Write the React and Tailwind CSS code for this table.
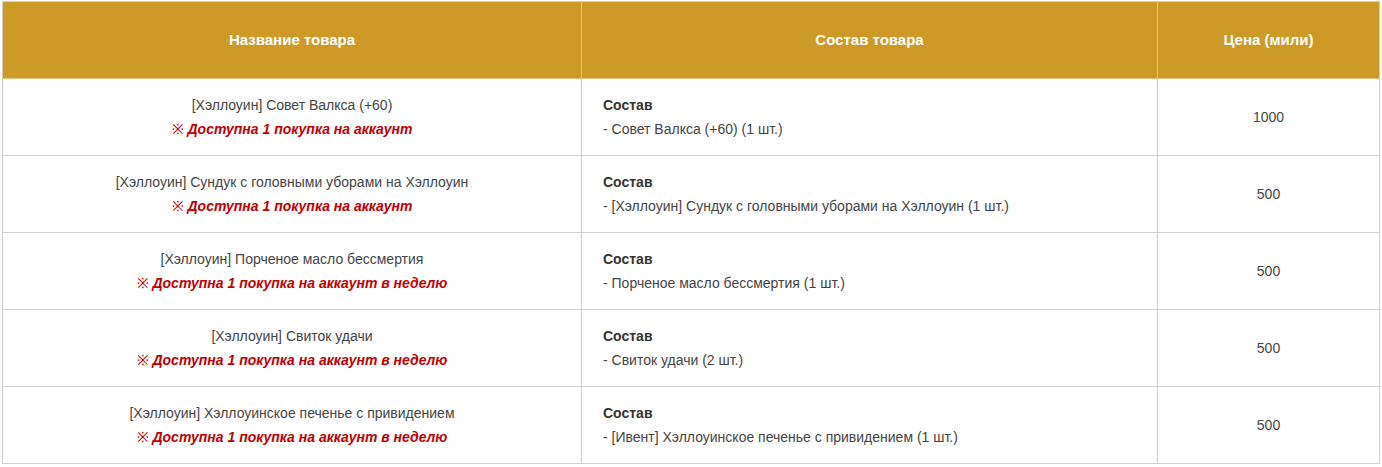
const rows = [
  {
    name: "[Хэллоуин] Совет Валкса (+60)",
    limit: "Доступна 1 покупка на аккаунт",
    item: "- Совет Валкса (+60) (1 шт.)",
    price: "1000",
  },
  {
    name: "[Хэллоуин] Сундук с головными уборами на Хэллоуин",
    limit: "Доступна 1 покупка на аккаунт",
    item: "- [Хэллоуин] Сундук с головными уборами на Хэллоуин (1 шт.)",
    price: "500",
  },
  {
    name: "[Хэллоуин] Порченое масло бессмертия",
    limit: "Доступна 1 покупка на аккаунт в неделю",
    item: "- Порченое масло бессмертия (1 шт.)",
    price: "500",
  },
  {
    name: "[Хэллоуин] Свиток удачи",
    limit: "Доступна 1 покупка на аккаунт в неделю",
    item: "- Свиток удачи (2 шт.)",
    price: "500",
  },
  {
    name: "[Хэллоуин] Хэллоуинское печенье с привидением",
    limit: "Доступна 1 покупка на аккаунт в неделю",
    item: "- [Ивент] Хэллоуинское печенье с привидением (1 шт.)",
    price: "500",
  },
]

export default function App() {
  return (
    <div className="bg-white pl-[2px] pt-[1px] font-['Liberation_Sans',Arial,sans-serif]">
      <table className="w-[1377px] table-fixed border-collapse border border-[#cfcfcf] text-[14px]">
        <colgroup>
          <col className="w-[579px]" />
          <col className="w-[576px]" />
          <col className="w-[222px]" />
        </colgroup>
        <thead>
          <tr className="h-[77px] bg-[#cd9a28] text-white">
            <th className="border border-[#e2c37c] border-t-[#cfcfcf] border-l-[#cfcfcf] text-[15px] font-bold">
              Название товара
            </th>
            <th className="border border-[#e2c37c] border-t-[#cfcfcf] text-[15px] font-bold">Состав товара</th>
            <th className="border border-[#e2c37c] border-t-[#cfcfcf] border-r-[#cfcfcf] text-[15px] font-bold">
              Цена (мили)
            </th>
          </tr>
        </thead>
        <tbody>
          {rows.map((row) => (
            <tr key={row.name} className="h-[77px] text-[#444]">
              <td className="border border-[#cfcfcf] text-center align-middle leading-[24px]">
                <div>{row.name}</div>
                <div className="text-[#c00000]">
                  <span>※ </span>
                  <span className="font-bold italic">{row.limit}</span>
                </div>
              </td>
              <td className="border border-[#cfcfcf] pl-[21px] align-middle leading-[24px]">
                <div className="font-bold text-[#333]">Состав</div>
                <div>{row.item}</div>
              </td>
              <td className="border border-[#cfcfcf] text-center align-middle">{row.price}</td>
            </tr>
          ))}
        </tbody>
      </table>
    </div>
  )
}
